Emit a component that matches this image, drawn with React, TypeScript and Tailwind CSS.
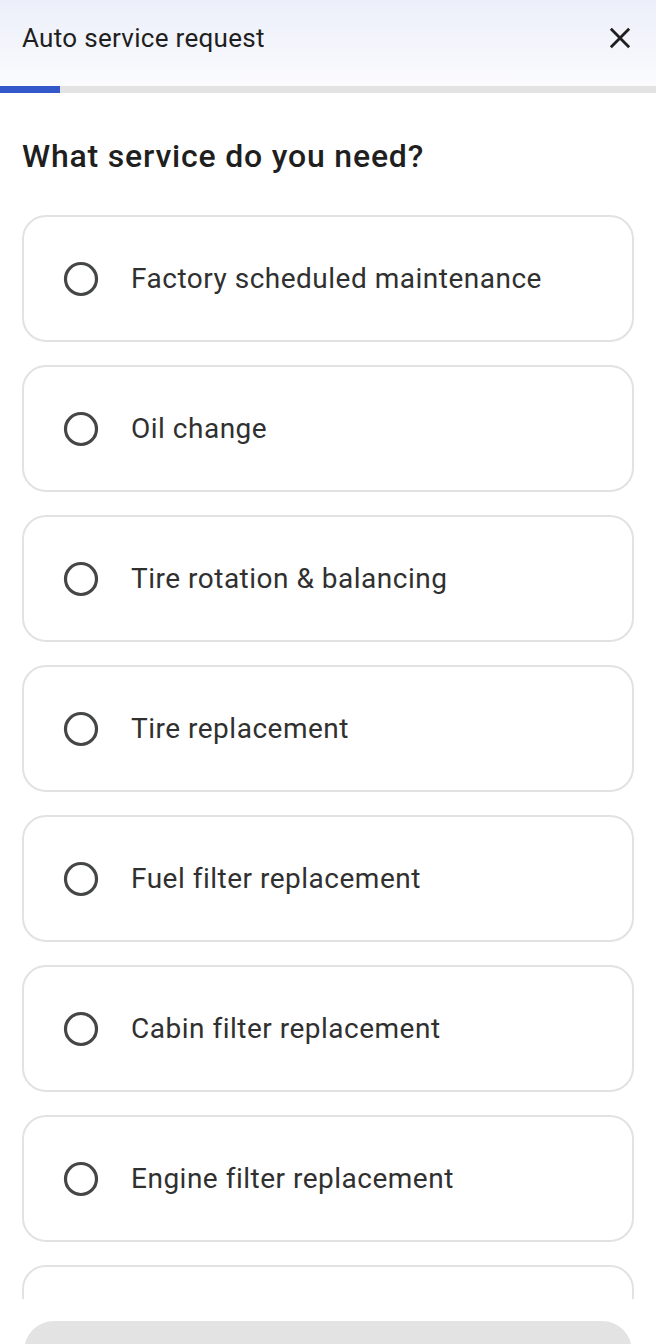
const services = [
  "Factory scheduled maintenance",
  "Oil change",
  "Tire rotation & balancing",
  "Tire replacement",
  "Fuel filter replacement",
  "Cabin filter replacement",
  "Engine filter replacement",
];

function Radio() {
  return (
    <svg className="w-[38px] h-[38px] shrink-0" viewBox="0 0 38 38" fill="none">
      <circle cx="19" cy="19" r="15.5" stroke="#444746" strokeWidth="3.2" />
    </svg>
  );
}

export default function App() {
  return (
    <div className="w-[656px] h-[1344px] bg-white overflow-hidden flex flex-col font-['Roboto',sans-serif] text-[#1f1f1f]">
      {/* Header */}
      <header className="h-[86px] shrink-0 bg-gradient-to-b from-[#eceffa] to-[#fbfbfe] flex items-center justify-between pl-[22px] pr-[18px]">
        <h1 className="text-[26px] leading-none tracking-[0.3px] text-[#1f1f1f] -mt-[10px]">Auto service request</h1>
        <button className="w-[36px] h-[36px] flex items-center justify-center -mt-[10px]">
          <svg className="w-[28px] h-[28px]" viewBox="0 0 24 24" fill="none" stroke="#1f1f1f" strokeWidth="2.4" strokeLinecap="square">
            <path d="M5 5l14 14M19 5L5 19" />
          </svg>
        </button>
      </header>

      {/* Progress */}
      <div className="h-[7px] shrink-0 bg-[#e3e3e3] flex">
        <div className="w-[60px] h-full bg-[#3457c9]" />
      </div>

      <div className="flex-1 flex flex-col overflow-hidden">
        <h2 className="shrink-0 px-[22px] pt-[46px] pb-[42px] text-[32px] leading-[34px] tracking-[0.8px] font-medium text-[#1f1f1f]">
          What service do you need?
        </h2>

        <div className="h-[1084px] shrink-0 overflow-hidden px-[22px]">
          <div className="flex flex-col gap-[23px]">
            {services.map((s) => (
              <label
                key={s}
                className="h-[127px] shrink-0 rounded-[24px] border-2 border-[#e1e2e3] bg-white flex items-center gap-[31px] pl-[38px] pr-6"
              >
                <Radio />
                <span className="text-[28px] tracking-[0.5px] text-[#303030]">{s}</span>
              </label>
            ))}
            <div className="h-[127px] shrink-0 rounded-[24px] border-2 border-[#e1e2e3] bg-white" />
          </div>
        </div>

        <div className="shrink-0 px-[24px] pt-[22px]">
          <div className="h-[60px] rounded-t-[30px] bg-[#e3e3e3]" />
        </div>
      </div>
    </div>
  );
}
